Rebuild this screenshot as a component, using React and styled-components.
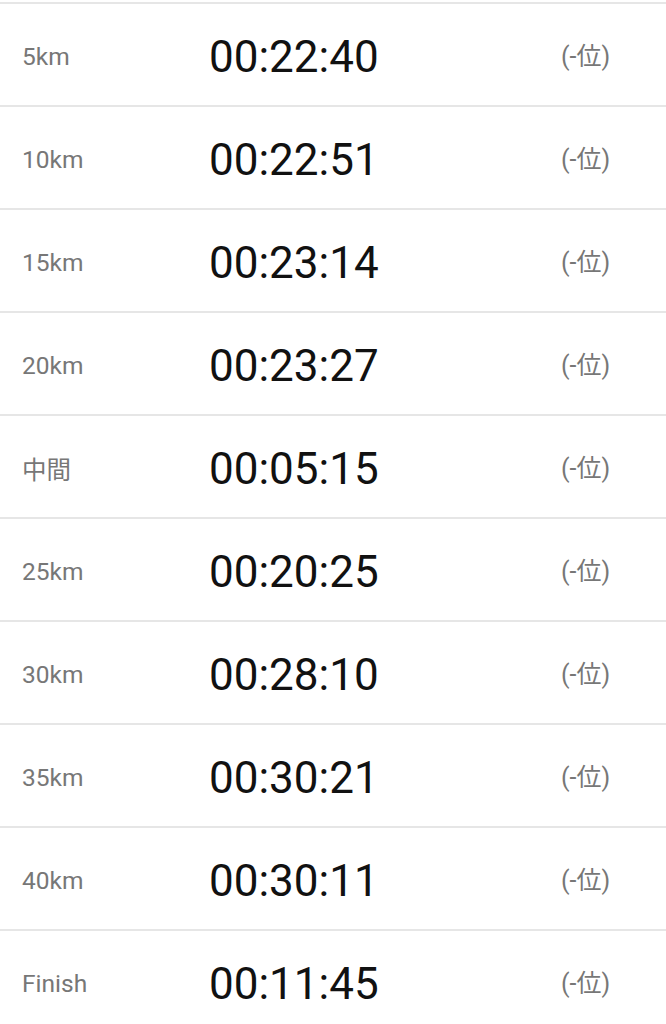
import React from "react";
import styled, { createGlobalStyle } from "styled-components";

const Global = createGlobalStyle`
  html, body { margin: 0; padding: 0; background: #fff; }
  body { font-family: Roboto, "Noto Sans CJK JP", sans-serif; overflow: hidden; }
`;

const List = styled.div`
  padding-top: 2px;
  width: 666px;
`;

const Row = styled.div`
  display: grid;
  grid-template-columns: 187px 352px 1fr;
  align-items: center;
  height: 101px;
  padding-left: 22px;
  border-top: 2px solid #e6e6e6;
`;

const Label = styled.div`
  font-size: 24.5px;
  color: #777;
  padding-top: 3px;
`;

const Time = styled.div`
  font-size: 44px;
  color: #111;
  padding-top: 4px;
`;

const Rank = styled.div`
  font-size: 25px;
  color: #777;
  padding-bottom: 2px;
`;

const data = [
  ["5km", "00:22:40"],
  ["10km", "00:22:51"],
  ["15km", "00:23:14"],
  ["20km", "00:23:27"],
  ["中間", "00:05:15"],
  ["25km", "00:20:25"],
  ["30km", "00:28:10"],
  ["35km", "00:30:21"],
  ["40km", "00:30:11"],
  ["Finish", "00:11:45"],
];

export default function App() {
  return (
    <>
      <Global />
      <List>
        {data.map(([label, time]) => (
          <Row key={label}>
            <Label>{label}</Label>
            <Time>{time}</Time>
            <Rank>(-位)</Rank>
          </Row>
        ))}
      </List>
    </>
  );
}
